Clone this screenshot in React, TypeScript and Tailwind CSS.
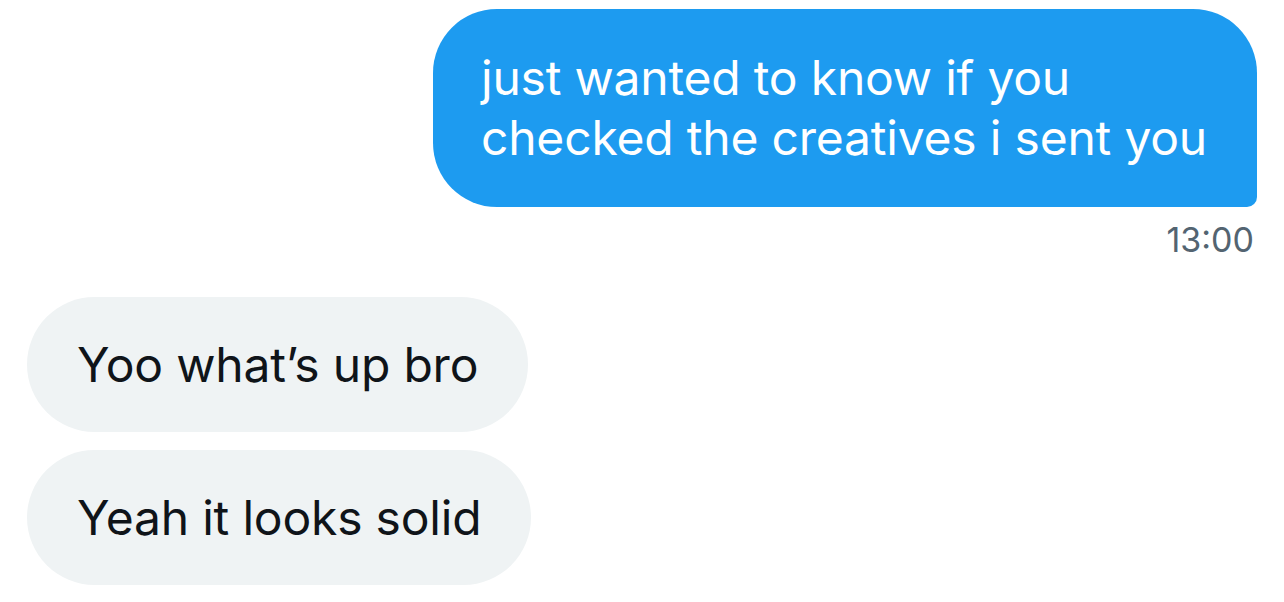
export default function App() {
  return (
    <div
      className="flex h-[602px] w-[1284px] flex-col bg-white px-[27px] pt-[9px]"
      style={{ fontFamily: "Inter, 'Noto Sans', sans-serif" }}
    >
      <div className="flex flex-col items-end">
        <div className="rounded-[64px] rounded-br-[10px] bg-[#1d9bf0] py-[39px] pl-[48px] pr-[50px] text-[48px] leading-[60px] tracking-[-0.2px] text-white">
          just wanted to know if you
          <br />
          checked the creatives i sent you
        </div>
        <div className="mt-[13px] mr-[3px] text-[34px] leading-[40px] text-[#536471]">13:00</div>
      </div>
      <div className="mt-[37px] flex flex-col items-start gap-[18px]">
        <div className="rounded-full bg-[#eff3f4] px-[50px] py-[37px] text-[48px] leading-[61px] tracking-[-0.2px] text-[#0f1419]">
          Yoo what’s up bro
        </div>
        <div className="rounded-full bg-[#eff3f4] px-[50px] py-[37px] text-[48px] leading-[61px] tracking-[-0.2px] text-[#0f1419]">
          Yeah it looks solid
        </div>
      </div>
    </div>
  );
}
